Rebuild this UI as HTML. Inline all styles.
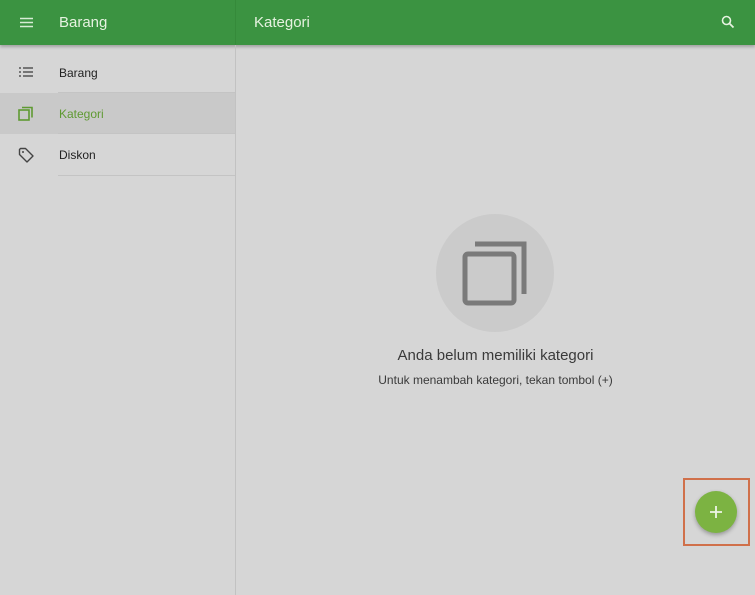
<html><head><style>
body{margin:0;width:755px;height:550px;overflow:hidden;background:#d6d6d6;font-family:"Liberation Sans",sans-serif;position:relative}
.hdr{position:absolute;left:0;top:0;width:755px;height:45px;background:#3b9341;box-shadow:0 2px 3px rgba(0,0,0,.25)}
.t{position:absolute;color:#e6f2e0;font-size:15px}
.sep{position:absolute;left:235px;top:0;width:1px;height:550px;background:#c2c2c2}
.row{position:absolute;left:0;width:235px;height:41px}
.row span{position:absolute;left:59px;top:14px;font-size:12px;color:#222}
.div{position:absolute;left:58px;width:177px;height:1px;background:#c4c4c4}
</style></head><body>
<div class="hdr"></div>
<div style="position:absolute;left:235px;top:0;width:1px;height:45px;background:#358a3a"></div>
<svg style="position:absolute;left:20px;top:17px" width="14" height="11"><path d="M0 1.5H13M0 5.5H13M0 9.5H13" stroke="#d7ecd5" stroke-width="1.6"/></svg>
<div class="t" style="left:59px;top:14px">Barang</div>
<div class="t" style="left:254px;top:14px">Kategori</div>
<svg style="position:absolute;left:721px;top:15px" width="14" height="14"><circle cx="5.5" cy="5.5" r="4" fill="none" stroke="#e6f2e0" stroke-width="1.6"/><path d="M8.5 8.5L12.5 12.5" stroke="#e6f2e0" stroke-width="1.8"/></svg>
<div class="sep" style="top:45px"></div>
<div class="row" style="top:52px"><span>Barang</span></div>
<svg style="position:absolute;left:19px;top:67px" width="14" height="10"><path d="M0 1H2M4 1H14M0 5H2M4 5H14M0 9H2M4 9H14" stroke="#555" stroke-width="1.4"/></svg>
<div class="div" style="top:92px"></div>
<div class="row" style="top:93px;background:#c9c9c9"><span style="color:#5f9a32">Kategori</span></div>
<svg style="position:absolute;left:18px;top:106px" width="16" height="16"><rect x="1" y="4" width="10" height="10" fill="none" stroke="#5f9a32" stroke-width="1.6"/><path d="M4 1.5H14V11.5" fill="none" stroke="#5f9a32" stroke-width="1.6"/></svg>
<div class="div" style="top:133px"></div>
<div class="row" style="top:134px"><span>Diskon</span></div>
<svg style="position:absolute;left:18px;top:147px" width="17" height="17"><path d="M1.5 2.5V7.5L9 15L15 9L7.5 1.5H2.5Z" fill="none" stroke="#444" stroke-width="1.4" stroke-linejoin="round"/><circle cx="5" cy="5" r="1" fill="#444"/></svg>
<div class="div" style="top:175px"></div>
<div style="position:absolute;left:436px;top:214px;width:118px;height:118px;border-radius:50%;background:#cbcbcb"></div>
<svg style="position:absolute;left:455px;top:235px" width="80" height="75"><rect x="10" y="19" width="49" height="49" rx="3" fill="none" stroke="#7a7a7a" stroke-width="5"/><path d="M20 9H69V59" fill="none" stroke="#7a7a7a" stroke-width="5"/></svg>
<div style="position:absolute;left:236px;top:347px;width:519px;text-align:center;font-size:15px;color:#3a3a3a">Anda belum memiliki kategori</div>
<div style="position:absolute;left:236px;top:373px;width:519px;text-align:center;font-size:12px;color:#3a3a3a">Untuk menambah kategori, tekan tombol (+)</div>
<div style="position:absolute;left:683px;top:478px;width:63px;height:64px;border:2.5px solid #d0704a"></div>
<div style="position:absolute;left:695px;top:491px;width:42px;height:42px;border-radius:50%;background:#7cb342;box-shadow:0 2px 4px rgba(0,0,0,.3)"></div>
<svg style="position:absolute;left:709px;top:505px" width="14" height="14"><path d="M7 1V13M1 7H13" stroke="#eef5e6" stroke-width="1.8"/></svg>
</body></html>
